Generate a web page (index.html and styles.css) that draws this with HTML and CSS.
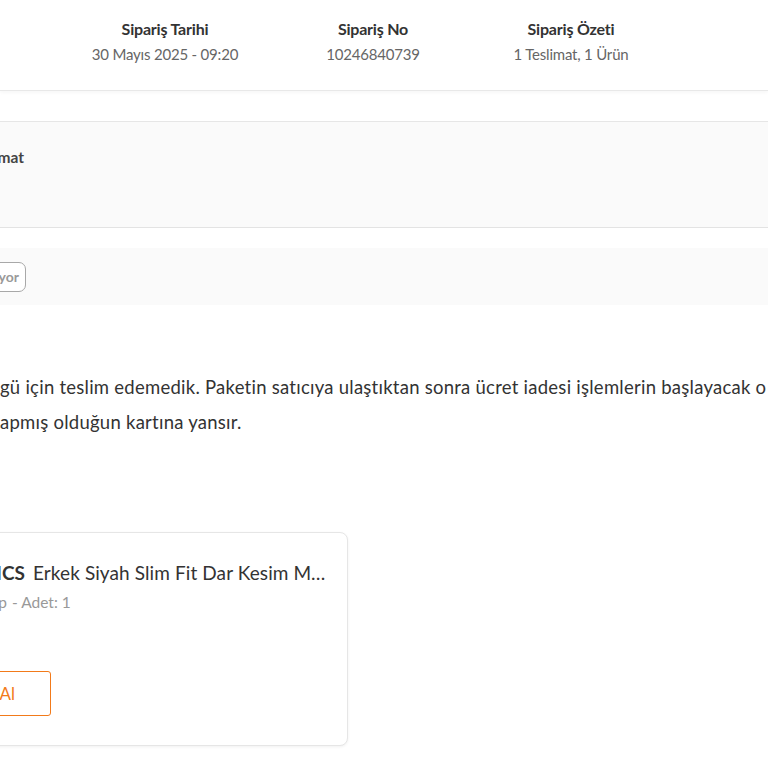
FILE: index.html
```html
<!DOCTYPE html>
<html lang="tr">

<head>
    <meta charset="UTF-8">
    <meta name="viewport" content="width=device-width, initial-scale=1.0">
    <title>Sipariş Detayı</title>
    <link rel="stylesheet" href="styles.css">
</head>

<body>
    <div class="page">
        <!-- sipariş başlığı -->
        <div class="order-header">
            <div class="order-info col-date">
                <div class="info-title">Sipariş Tarihi</div>
                <div class="info-value">30 Mayıs 2025 - 09:20</div>
            </div>
            <div class="order-info col-no">
                <div class="info-title">Sipariş No</div>
                <div class="info-value">10246840739</div>
            </div>
            <div class="order-info col-summary">
                <div class="info-title">Sipariş Özeti</div>
                <div class="info-value">1 Teslimat, 1 Ürün</div>
            </div>
        </div>

        <!-- teslimat kutusu -->
        <div class="shipment-head">
            <div class="lead lead-title"><span class="shipment-title">Teslimat</span></div>
        </div>

        <div class="status-bar">
            <div class="lead lead-badge"><span class="status-badge">İade Ediliyor</span></div>
        </div>

        <div class="status-text">
            <p>gü için teslim edemedik. Paketin satıcıya ulaştıktan sonra ücret iadesi işlemlerin başlayacak o</p>
            <p>apmış olduğun kartına yansır.</p>
        </div>

        <!-- ürün kartı -->
        <div class="product-card">
            <div class="product-name">
                <div class="lead lead-brand"><strong>TOMMYLIFE ICS</strong></div>
                <span class="name-text">Erkek Siyah Slim Fit Dar Kesim Mont</span>
            </div>
            <div class="product-meta">
                <div class="lead lead-size"><span>Beden: Tek Tip</span></div>
                <span class="meta-rest">- Adet: 1</span>
            </div>
            <button class="btn-rebuy">Tekrar Satın Al</button>
        </div>
    </div>
</body>

</html>
```

FILE: styles.css
```css
body {
    margin: 0;
    font-family: Lato, "Liberation Sans", sans-serif;
    color: #333;
    background: #fff;
}

.page {
    width: 768px;
    height: 768px;
    overflow: hidden;
}

/* sağa yaslı, soldan taşan kutu */
.lead {
    flex: none;
    display: flex;
    justify-content: flex-end;
    white-space: nowrap;
}

/* üst bilgi */
.order-header {
    display: flex;
    height: 90px;
    padding-left: 65px;
    border-bottom: 1px solid #e8e8e8;
    box-shadow: 0 2px 3px rgba(0, 0, 0, 0.03);
}

.order-info {
    text-align: center;
    padding-top: 18px;
}

.col-date {
    width: 200px;
}

.col-no {
    width: 216px;
}

.col-summary {
    width: 180px;
}

.info-title {
    font-size: 16px;
    font-weight: 700;
    line-height: 22px;
    color: #333;
    letter-spacing: -0.2px;
}

.info-value {
    margin-top: 4px;
    font-size: 15px;
    line-height: 20px;
    color: #666;
    letter-spacing: -0.2px;
}

/* teslimat */
.shipment-head {
    margin-top: 30px;
    height: 105px;
    background: #fafafa;
    border-top: 1px solid #e6e6e6;
    border-bottom: 1px solid #e3e3e3;
}

.lead-title {
    width: 24px;
    padding-top: 25px;
}

.shipment-title {
    font-size: 15.5px;
    font-weight: 700;
    line-height: 20px;
    color: #444;
}

.status-bar {
    margin-top: 20px;
    height: 57px;
    background: #fafafa;
    display: flex;
    align-items: center;
}

.lead-badge {
    width: 26px;
}

.status-badge {
    height: 28px;
    padding: 0 6px;
    border: 1px solid #a8a8a8;
    border-radius: 7px;
    font-size: 14px;
    font-weight: 700;
    line-height: 28px;
    color: #999;
    background: #fff;
}

/* açıklama */
.status-text {
    margin-top: 65px;
    font-size: 18.5px;
    line-height: 35px;
    color: #333;
    white-space: nowrap;
    letter-spacing: 0.25px;
}

.status-text p {
    margin: 0;
}

/* ürün kartı */
.product-card {
    margin-top: 92px;
    margin-left: -101px;
    width: 449px;
    height: 214px;
    padding: 28px 16px 0 16px;
    box-sizing: border-box;
    border: 1px solid #e6e6e6;
    border-radius: 8px;
    box-shadow: 0 1px 3px rgba(0, 0, 0, 0.06);
    background: #fff;
}

.product-name {
    display: flex;
    font-size: 19px;
    line-height: 24px;
    color: #333;
    white-space: nowrap;
    letter-spacing: 0.1px;
}

.lead-brand {
    width: 109px;
    margin-right: 8px;
}

.lead-brand strong {
    font-weight: 700;
    letter-spacing: 0;
}

.name-text {
    min-width: 0;
    overflow: hidden;
    text-overflow: ellipsis;
}

.product-meta {
    display: flex;
    margin-top: 7px;
    font-size: 15.5px;
    line-height: 20px;
    color: #999;
    white-space: nowrap;
}

.lead-size {
    width: 91px;
}

.meta-rest {
    margin-left: 5px;
}

.btn-rebuy {
    display: block;
    margin-top: 59px;
    width: 135px;
    height: 45px;
    border: 1px solid #f27a1a;
    border-radius: 3px;
    background: #fff;
    color: #f27a1a;
    font-family: inherit;
    font-size: 17px;
    white-space: nowrap;
    text-align: right;
    padding: 0 35px 0 0;
    direction: rtl;
}
```
